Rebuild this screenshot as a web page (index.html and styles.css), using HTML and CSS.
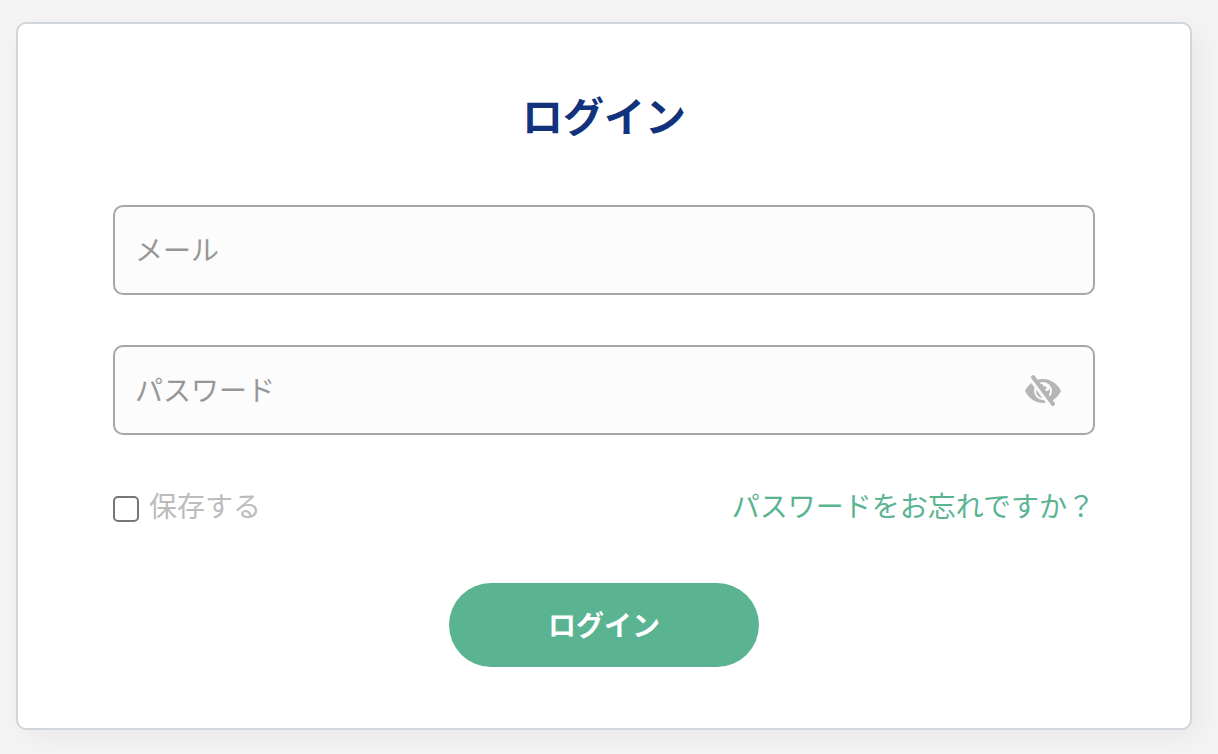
FILE: index.html
```html
<!DOCTYPE html>
<html lang="ja">
<head>
    <meta charset="UTF-8">
    <meta name="viewport" content="width=device-width, initial-scale=1.0">
    <title>ログイン</title>
    <link rel="stylesheet" href="styles.css">
</head>
<body>
    <main class="login-card">
        <h1 class="login-title">ログイン</h1>
        <form class="login-form">
            <div class="field">
                <input type="email" id="email" class="field-input" placeholder="メール" aria-label="メール">
            </div>
            <div class="field">
                <input type="password" id="password" class="field-input" placeholder="パスワード" aria-label="パスワード">
                <button type="button" class="toggle-password" aria-label="パスワードを表示">
                    <svg class="eye-icon" viewBox="0 0 40 36" aria-hidden="true">
                        <path class="eye-fill" d="M2 18C6 10 13 6 20 6s14 4 18 12c-4 8-11 12-18 12S6 26 2 18Z"/>
                        <circle class="eye-ring" cx="20" cy="18" r="8"/>
                        <path class="eye-shine" d="M20 12c3-1 5 1 5 3 0 1.500-1.500 2-2.500 1.500"/>
                        <path class="slash-gap" d="M7.500 5.500l20 27"/>
                        <path class="slash" d="M10 4l20 27"/>
                    </svg>
                </button>
            </div>
            <div class="options">
                <label class="remember" for="remember">
                    <input type="checkbox" id="remember" class="remember-box">
                    保存する
                </label>
                <a href="#" class="forgot-link">パスワードをお忘れですか？</a>
            </div>
            <button type="submit" class="login-button">ログイン</button>
        </form>
    </main>
</body>
</html>
```

FILE: styles.css
```css
* {
    box-sizing: border-box;
}
body {
    margin: 0;
    padding: 22px 26px 24px 16px;
    background-color: #f4f4f4;
    font-family: "Noto Sans CJK JP", sans-serif;
    font-size: 28px;
}
.login-card {
    padding: 60px 95px 61px;
    background-color: #fff;
    border: 2px solid #d1d5dc;
    border-radius: 10px;
    box-shadow: 8px 8px 30px rgba(0, 0, 0, 0.05);
}
.login-title {
    margin: 0 0 61px;
    color: #12327c;
    font-size: 41px;
    line-height: 60px;
    text-align: center;
}
.login-form {
    display: flex;
    flex-direction: column;
}
.field {
    position: relative;
    margin-bottom: 50px;
}
.field-input {
    display: block;
    width: 100%;
    height: 90px;
    padding: 0 20px 2px;
    border: 2px solid #a6a6a6;
    border-radius: 10px;
    background-color: #fcfcfc;
    color: #333;
    font: inherit;
}
.field-input::placeholder {
    color: #979797;
}
#password {
    padding-right: 90px;
}
.toggle-password {
    position: absolute;
    top: 28px;
    right: 32px;
    padding: 0;
    border: none;
    background: none;
    cursor: pointer;
}
.eye-icon {
    display: block;
    width: 40px;
    height: 36px;
}
.eye-fill {
    fill: #b5b5b5;
}
.eye-ring,
.eye-shine {
    fill: none;
    stroke: #fcfcfc;
    stroke-width: 2;
}
.eye-shine {
    stroke-width: 3;
}
.slash-gap,
.slash {
    fill: none;
    stroke: #fcfcfc;
    stroke-width: 4;
    stroke-linecap: round;
}
.slash {
    stroke: #b5b5b5;
}
.options {
    display: flex;
    justify-content: space-between;
    align-items: center;
    margin-bottom: 58px;
    line-height: 40px;
}
.remember {
    display: flex;
    align-items: center;
    gap: 10px;
    color: #bcbcbc;
}
.remember-box {
    appearance: none;
    width: 26px;
    height: 26px;
    margin: 8px 0 0;
    border: 2px solid #767676;
    border-radius: 5px;
    background-color: #fff;
}
.remember-box:checked {
    background-color: #5ab491;
}
.forgot-link {
    color: #5ab491;
    text-decoration: none;
}
.login-button {
    align-self: center;
    width: 310px;
    height: 84px;
    padding: 0 0 2px;
    border: none;
    border-radius: 42px;
    background-color: #5ab491;
    color: #fff;
    font: inherit;
    font-weight: bold;
    cursor: pointer;
}
```
